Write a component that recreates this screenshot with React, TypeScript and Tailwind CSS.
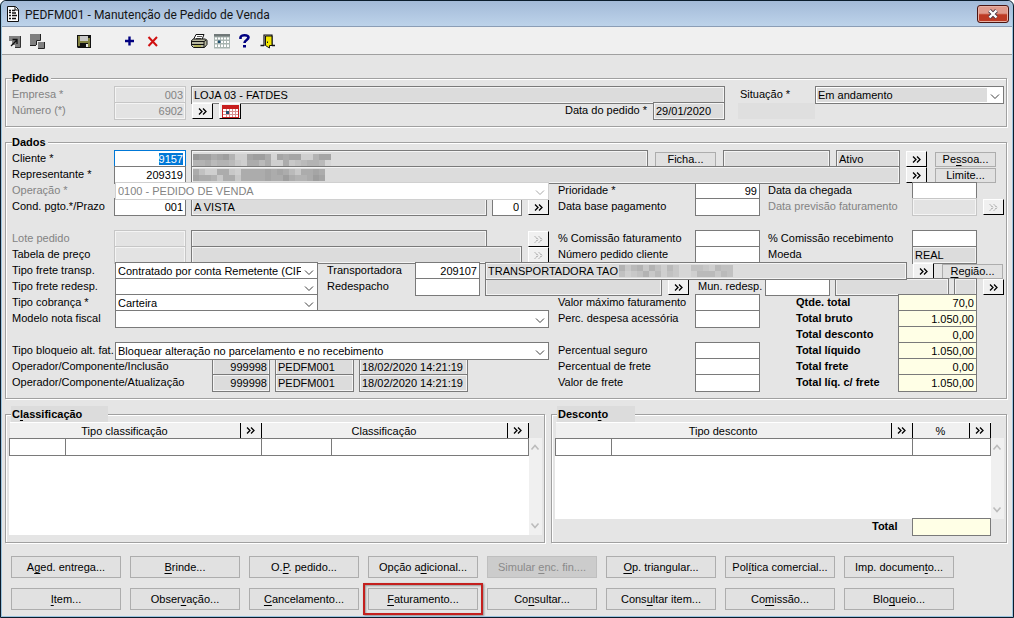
import { useEffect, useRef } from 'react';
import type { ReactNode } from 'react';
import clsx from 'clsx';

// "C&onsultar" -> the letter after & is the keyboard mnemonic
function Mnemonic({ text }: { text: string }) {
  const at = text.indexOf('&');
  if (at < 0) return <>{text}</>;
  return (
    <span className="whitespace-pre">
      {text.slice(0, at)}
      <u className="underline-offset-2">{text[at + 1]}</u>
      {text.slice(at + 2)}
    </span>
  );
}

interface GroupProps {
  title: string;
  shaded?: boolean;
  className?: string;
  children: ReactNode;
}

function Group({ title, shaded, className, children }: GroupProps) {
  return (
    <fieldset
      className={clsx(
        'min-w-0 border border-[#a0a0a0] shadow-[inset_1px_1px_0_#fff,1px_1px_0_#fff]',
        className
      )}
    >
      <legend
        className={clsx(
          'h-4 font-bold leading-4',
          shaded ? 'ml-0.5 w-[97px] bg-[#dcdcdc] pl-px' : 'bg-[#e5e5e5] pr-0.5'
        )}
      >
        <Mnemonic text={title} />
      </legend>
      {children}
    </fieldset>
  );
}

function Row({ children }: { children?: ReactNode }) {
  return <div className="flex h-4 items-start gap-[5px]">{children}</div>;
}

interface LabelProps {
  htmlFor: string;
  className?: string;
  muted?: boolean;
  children: ReactNode;
}

function Label({ htmlFor, className = 'w-[97px]', muted, children }: LabelProps) {
  return (
    <label
      htmlFor={htmlFor}
      className={clsx('h-4 shrink-0 whitespace-nowrap leading-4', muted && 'text-[#838383]', className)}
    >
      {children}
    </label>
  );
}

const tones = {
  edit: 'border-[#7a7a7a] bg-white',
  read: 'border-[#7a7a7a] bg-[#dcdcdc] shadow-[inset_0_0_0_1px_#f4f4f4]',
  off: 'border-[#c6c6c6] bg-[#e3e3e3] text-[#838383] shadow-[inset_0_0_0_1px_#f4f4f4]',
  total: 'border-[#7a7a7a] bg-[#ffffe6]',
};

interface FieldProps {
  id: string;
  label?: string;
  value?: string;
  tone?: keyof typeof tones;
  right?: boolean;
  className?: string;
}

function Field({ id, label, value = '', tone = 'edit', right, className }: FieldProps) {
  return (
    <input
      id={id}
      type="text"
      aria-label={label}
      defaultValue={value}
      readOnly={tone === 'read' || tone === 'total'}
      disabled={tone === 'off'}
      className={clsx(
        'h-[18px] min-w-0 border px-0.5 leading-[14px] outline-none',
        right && 'text-right',
        tones[tone],
        className
      )}
    />
  );
}

// Customer names are pixelated for privacy
function Mosaic({ shades, className }: { shades: string[]; className: string }) {
  const size = 6;
  return (
    <svg
      aria-hidden="true"
      width={shades[0].length * size}
      height={shades.length * size}
      shapeRendering="crispEdges"
      className={clsx('pointer-events-none absolute', className)}
    >
      {shades.map((line, y) =>
        [...line].map((c, x) => {
          const v = 130 + parseInt(c, 16) * 7;
          return (
            <rect
              key={`${x}-${y}`}
              x={x * size}
              y={y * size}
              width={size}
              height={size}
              fill={`rgb(${v},${v},${v})`}
            />
          );
        })
      )}
    </svg>
  );
}

interface SelectProps {
  id: string;
  value?: string;
  className?: string;
  disabled?: boolean;
  shaded?: boolean;
}

function Select({ id, value = '', className = 'flex-1', disabled, shaded }: SelectProps) {
  return (
    <span className={clsx('relative mx-px h-[18px] min-w-0', className)}>
      <select
        id={id}
        defaultValue={value}
        disabled={disabled}
        className={clsx(
          'block h-[18px] w-full appearance-none border pl-0.5 pr-4 leading-4 outline-none disabled:opacity-100',
          disabled ? 'border-[#d0d0d0] bg-white text-[#838383]' : 'border-[#7a7a7a]',
          shaded ? 'bg-[#dcdcdc] shadow-[inset_0_0_0_1px_#fff]' : 'bg-white'
        )}
      >
        <option value={value}>{value}</option>
      </select>
      <svg
        viewBox="0 0 16 16"
        className={clsx(
          'pointer-events-none absolute right-px top-px h-4 w-4 bg-white',
          disabled ? 'stroke-[#a8a8a8]' : 'stroke-[#404040]'
        )}
        fill="none"
      >
        <path d="M4 7.500l4 4 4-4" />
      </svg>
    </span>
  );
}

function Chevrons({ disabled }: { disabled?: boolean }) {
  return (
    <svg
      viewBox="0 0 9 7"
      className={clsx('h-[7px] w-[9px]', disabled ? 'stroke-[#777777]' : 'stroke-black')}
      fill="none"
      strokeWidth={disabled ? 1 : 1.3}
      strokeDasharray={disabled ? '1.4 1' : undefined}
    >
      <path d="M1 .5l3 3-3 3M5 .5l3 3-3 3" />
    </svg>
  );
}

interface LookupProps {
  label: string;
  disabled?: boolean;
}

function Lookup({ label, disabled }: LookupProps) {
  return (
    <button
      type="button"
      aria-label={label}
      disabled={disabled}
      className="mx-px mt-px flex h-4 w-[21px] shrink-0 items-center justify-center border border-b-black border-l-white border-r-black border-t-white bg-[#f0f0f0]"
    >
      <Chevrons disabled={disabled} />
    </button>
  );
}

function SmallButton({ text, className }: { text: string; className?: string }) {
  return (
    <button
      type="button"
      className={clsx(
        'mx-0.5 mt-0.5 h-[15px] w-[61px] shrink-0 border border-[#adadad] bg-[#e1e1e1] leading-[13px]',
        className
      )}
    >
      <Mnemonic text={text} />
    </button>
  );
}

function TotalRowItem({ id, label, value, push }: { id: string; label: string; value: string; push?: boolean }) {
  return (
    <>
      <Label htmlFor={id} className={clsx('w-[97px] font-bold', push ? 'ml-auto' : 'ml-[31px]')}>
        {label}
      </Label>
      <Field id={id} value={value} tone="total" right className="mr-7 w-[79px]" />
    </>
  );
}

function ClientCode() {
  const ref = useRef<HTMLInputElement>(null);

  useEffect(() => {
    ref.current?.focus();
    ref.current?.select();
  }, []);

  return (
    <input
      id="cliente"
      ref={ref}
      type="text"
      defaultValue="9157"
      className="h-[18px] w-[72px] border border-[#0078d7] bg-white px-0.5 text-right leading-[14px] outline-none selection:bg-[#0078d7] selection:text-white"
    />
  );
}

function ToolButton({ label, children }: { label: string; children: ReactNode }) {
  return (
    <button type="button" aria-label={label} className="flex h-6 w-[23px] items-center justify-center">
      <svg viewBox="0 0 18 18" className="h-[18px] w-[18px]" fill="none">
        {children}
      </svg>
    </button>
  );
}

function Toolbar() {
  return (
    <div className="flex h-7 items-center gap-[23px] border-b border-[#a0a0a0] bg-[#f0f0f0] pl-px">
      <div className="flex">
        <ToolButton label="Selecionar">
          <path d="M3 4h11v11H9v-2H6V9H3z" fill="#808080" />
          <path d="M14.5 4v11.5H9" stroke="#333" />
          <path d="M5 14l6-6M6.5 7.5H11V12" stroke="#111" strokeWidth="1.3" />
        </ToolButton>
        <ToolButton label="Navegar">
          <path d="M1 2h10v6H7v5H1z" fill="#808080" />
          <path d="M1 13.500h6M7.500 13V8.500H11.500V2" stroke="#222" />
          <path d="M9 10h6v6H9z" fill="#808080" />
          <path d="M9 16.500h6.500V10" stroke="#222" />
        </ToolButton>
      </div>
      <ToolButton label="Salvar">
        <path d="M2 3h14v13H3l-1-1z" fill="#111" />
        <path d="M3 4h2v10H3zM13 6h2v9h-2z" fill="#808040" />
        <path d="M3 9h12v2H3z" fill="#808040" />
        <path d="M5 4h8v5H5z" fill="#c8c8c8" />
        <path d="M11 12h2v3h-2z" fill="#e8e8e8" />
      </ToolButton>
      <div className="flex">
        <ToolButton label="Incluir">
          <path d="M8.500 4.500v9M4 9h9" stroke="#000080" strokeWidth="2.400" />
        </ToolButton>
        <ToolButton label="Excluir">
          <path d="M4.500 5l8.500 9M13 5l-8.500 9" stroke="#d01010" strokeWidth="2" />
        </ToolButton>
      </div>
      <div className="flex">
        <ToolButton label="Imprimir">
          <path d="M6 2.500h8l-2 5H3.500z" fill="#fff" stroke="#111" />
          <path d="M7 4.500h5M6 6.500h5" stroke="#555" />
          <path d="M1.500 8.500l2-1.500h12l1.500 1.500v4l-2.500 3h-11l-2-2z" fill="#b8b8a0" stroke="#111" />
          <path d="M2 9.500h12l2.500-1.500M14 9.500v5.500M2 12.500h12" stroke="#111" />
          <path d="M4 14h7" stroke="#b0b020" />
        </ToolButton>
        <ToolButton label="Calendário">
          <path d="M1 2h16v14.500H1z" fill="#a8b4b0" />
          <path d="M1 2h16v2.500H1z" fill="#707878" />
          <path
            d="M2 5.500h2v2H2zM5 5.500h2v2H5zM8 5.500h2v2H8zM11 5.500h2v2h-2zM14 5.500h2v2h-2zM2 9h2v2H2zM8 9h2v2H8zM11 9h2v2h-2zM14 9h2v2h-2zM2 12.500h2v2.500H2zM5 12.500h2v2.500H5zM8 12.500h2v2.500H8zM11 12.500h2v2.500h-2zM14 12.500h2v2.500h-2z"
            fill="#fff"
          />
          <path d="M5 8.500h2.500v2.500H5z" fill="#205070" />
        </ToolButton>
        <ToolButton label="Ajuda">
          <path d="M4.500 7V5.500c0-3 8-3 8 0 0 2.500-4 2.500-4 5.500" stroke="#000080" strokeWidth="2.600" />
          <path d="M7 13h3v2.500H7z" fill="#000080" />
        </ToolButton>
        <ToolButton label="Sair">
          <path d="M5 14V3h8v11" stroke="#111" strokeWidth="1.200" />
          <path d="M1.500 13.500H5M13 13.500h3" stroke="#111" strokeWidth="1.400" />
          <path d="M6.500 4H13v9.500h-2.500V16l-4-2.500z" fill="#f4e800" stroke="#111" />
          <path d="M8.500 9.500v1.500" stroke="#111" />
        </ToolButton>
      </div>
    </div>
  );
}

function TitleBar() {
  return (
    <header className="flex h-[26px] items-center border-b border-[#8b9db5] bg-linear-to-b from-[#a3bad8] to-[#bdd3ea] pl-[5px] pr-[3px]">
      <svg viewBox="0 0 12 16" className="h-4 w-3" fill="none">
        <path d="M.5.500h8l3 3v12H.500z" fill="#fff" stroke="#111" />
        <path d="M8 1v3h3" stroke="#111" />
        <path d="M2 4.500h2M5 4.500h3M2 6.500h2M5 7h4M2 9.500h2M5 9.500h5M2 12.500h2M5 12.500h4" stroke="#111" strokeWidth="1.300" />
      </svg>
      <h1 className="ml-1.5 mt-0.5 flex-1 font-[Roboto,sans-serif] text-[12px] leading-4 text-[#141414]">
        PEDFM001 - Manutenção de Pedido de Venda
      </h1>
      <button
        type="button"
        aria-label="Fechar"
        className="flex h-[18px] w-8 items-center justify-center rounded-[3px] border border-[#4a1512] bg-linear-to-b from-[#e09a8c] from-45% to-[#bd3a24] to-55% shadow-[inset_0_0_0_1px_#e8b0a4]"
      >
        <svg viewBox="0 0 12 10" className="h-2.5 w-3" fill="none">
          <path d="M2.500 1.500l7 7M9.500 1.500l-7 7" stroke="#4a3a48" strokeWidth="4" />
          <path d="M2.500 1.500l7 7M9.500 1.500l-7 7" stroke="#fff" strokeWidth="2.400" />
        </svg>
      </button>
    </header>
  );
}

function HeadCell({ text, colSpan }: { text: string; colSpan?: number }) {
  return (
    <th colSpan={colSpan} className="h-4 p-0 font-normal">
      <div className="flex h-4 border-t border-white bg-[#f0f0f0]">
        <span className="flex-1 border-r border-black text-center leading-4">{text}</span>
        <button
          type="button"
          aria-label={`Pesquisar ${text}`}
          className="flex w-[21px] items-center justify-center border-r border-black"
        >
          <Chevrons />
        </button>
      </div>
    </th>
  );
}

function ScrollBar() {
  return (
    <div className="mt-4 flex w-[13px] flex-col justify-between bg-[#f0f0f0] py-1.5">
      <svg viewBox="0 0 13 7" className="h-[7px] w-full stroke-[#bcbcbc]" fill="none" strokeWidth="1.600">
        <path d="M2.500 5.500l3.500-4 3.500 4" />
      </svg>
      <svg viewBox="0 0 13 7" className="h-[7px] w-full stroke-[#bcbcbc]" fill="none" strokeWidth="1.600">
        <path d="M2.500 1.500l3.500 4 3.500-4" />
      </svg>
    </div>
  );
}

const cell = 'h-[17px] border border-[#7a7a7a] bg-white p-0';

function Classificacao() {
  return (
    <Group title="C&lassificação" shaded className="pb-[7px] pl-[3px] pr-0.5">
      <div className="flex h-[113px]">
        <div className="flex flex-1 flex-col">
          <table className="w-full table-fixed border-collapse">
            <colgroup>
              <col className="w-[56px]" />
              <col className="w-[196px]" />
              <col className="w-[70px]" />
              <col />
            </colgroup>
            <thead>
              <tr>
                <HeadCell text="Tipo classificação" colSpan={2} />
                <HeadCell text="Classificação" colSpan={2} />
              </tr>
            </thead>
            <tbody>
              <tr>
                <td className={cell} />
                <td className={cell} />
                <td className={cell} />
                <td className={cell} />
              </tr>
            </tbody>
          </table>
          <div className="flex-1 bg-white" />
        </div>
        <ScrollBar />
      </div>
    </Group>
  );
}

function Desconto() {
  return (
    <Group title="Descon&to" shaded className="pl-[3px] pr-0.5 [&>legend]:w-[78px]">
      <div className="flex h-[97px]">
        <div className="flex flex-1 flex-col">
          <table className="w-full table-fixed border-collapse">
            <colgroup>
              <col className="w-[56px]" />
              <col />
              <col className="w-[78px]" />
            </colgroup>
            <thead>
              <tr>
                <HeadCell text="Tipo desconto" colSpan={2} />
                <HeadCell text="%" />
              </tr>
            </thead>
            <tbody>
              <tr>
                <td className={cell} />
                <td className={cell} />
                <td className={cell} />
              </tr>
            </tbody>
          </table>
          <div className="flex-1 bg-white" />
        </div>
        <ScrollBar />
      </div>
      <div className="-mt-px flex justify-end pr-[13px]">
        <Label htmlFor="total-desc" className="w-10 font-bold">
          Total
        </Label>
        <Field id="total-desc" tone="total" className="w-[79px]" />
      </div>
    </Group>
  );
}

const actions = [
  { text: 'A&ged. entrega...' },
  { text: '&Brinde...' },
  { text: 'O.&P. pedido...' },
  { text: 'Opção a&dicional...' },
  { text: 'Simular &enc. fin....', disabled: true },
  { text: '&Op. triangular...' },
  { text: 'Pol&ítica comercial...' },
  { text: 'Imp. documen&to...' },
  { text: '&Item...' },
  { text: 'Obser&vação...' },
  { text: '&Cancelamento...' },
  { text: '&Faturamento...', marked: true },
  { text: 'Co&nsultar...' },
  { text: 'Cons&ultar item...' },
  { text: 'Co&missão...' },
  { text: 'Blo&queio...' },
];

export default function App() {
  return (
    <div className="rounded-t-md border border-[#0b1c2c] bg-[#9cc4de] font-['Liberation_Sans',Arial,sans-serif] text-[11px] text-black">
      <div className="mx-px mb-px overflow-hidden rounded-t-[5px] bg-[#e5e5e5]">
        <TitleBar />
        <Toolbar />
        <main className="flex flex-col gap-[7px] pb-1.5 pl-[3px] pr-[5px] pt-[15px]">
          <Group title="Pedido" className="pb-2 pl-1.5 pr-px">
            <Row>
              <Label htmlFor="empresa" muted>Empresa *</Label>
              <Field id="empresa" value="003" tone="off" right className="w-[72px]" />
              <Field id="empresa-nome" label="Nome da empresa" value="LOJA 03 - FATDES" tone="read" className="flex-1" />
              <Label htmlFor="situacao" className="ml-2.5 w-[69px]">Situação *</Label>
              <Select id="situacao" value="Em andamento" shaded className="w-[189px]" />
            </Row>
            <Row>
              <Label htmlFor="numero" muted>Número (*)</Label>
              <Field id="numero" value="6902" tone="off" right className="w-[72px]" />
              <Lookup label="Pesquisar pedido" />
              <button
                type="button"
                aria-label="Agenda"
                className="mt-px flex h-4 w-[22px] items-center justify-center border border-b-black border-l-white border-r-black border-t-white bg-[#f0f0f0]"
              >
                <svg viewBox="0 0 17 13" className="h-[13px] w-[17px]">
                  <path d="M0 0h17v13H0z" fill="#c81e1e" />
                  <path d="M1 4h15v8H1z" fill="#fff" />
                  <path d="M4.500 4v8M7.500 4v8M10.500 4v8M13.500 4v8M1 6.500h15M1 9.500h15" stroke="#d89090" fill="none" />
                  <path d="M4 6h3v3H4z" fill="#205070" />
                </svg>
              </button>
              <Label htmlFor="data-pedido" className="ml-auto w-[83px]">Data do pedido *</Label>
              <Field id="data-pedido" value="29/01/2020" tone="read" className="w-[72px]" />
              <div className="ml-2 mr-[190px] mt-px h-4 w-[77px] bg-[#dfdfdf]" />
            </Row>
          </Group>

          <Group title="Dados" className="pb-2 pl-1.5 pr-px">
            <Row>
              <Label htmlFor="cliente">Cliente *</Label>
              <ClientCode />
              <span className="relative flex flex-1">
                <Field id="cliente-nome" label="Nome do cliente" tone="read" className="w-full" />
                <Mosaic
                  className="left-0.5 top-1"
                  shades={['3446547bb5446c5655bb755', '7768778ab6686bb6a98778c']}
                />
              </span>
              <SmallButton text="Ficha..." />
              <Field id="cliente-doc" label="Documento" tone="read" className="w-[107px]" />
              <Field id="cliente-status" label="Status do cliente" value="Ativo" tone="read" className="ml-px w-[64px]" />
              <Lookup label="Pesquisar cliente" />
              <SmallButton text="Pe&ssoa..." className="mr-[9px]" />
            </Row>
            <Row>
              <Label htmlFor="representante">Representante *</Label>
              <Field id="representante" value="209319" right className="w-[72px]" />
              <span className="relative flex flex-1">
                <Field id="representante-nome" label="Nome do representante" tone="read" className="w-full" />
                <Mosaic
                  className="left-0.5 top-[3px]"
                  shades={['69bb66ab666656568a6656', '5667a66a66665664677645']}
                />
              </span>
              <Lookup label="Pesquisar representante" />
              <SmallButton text="Limite..." className="mr-[9px]" />
            </Row>
            <Row>
              <Label htmlFor="operacao" muted>Operação *</Label>
              <Select id="operacao" value="0100 - PEDIDO DE VENDA" disabled />
              <Label htmlFor="prioridade" className="ml-[3px] w-[132px]">Prioridade *</Label>
              <Field id="prioridade" value="99" right className="w-[65px]" />
              <Label htmlFor="chegada" className="ml-[3px] w-[139px]">Data da chegada</Label>
              <Field id="chegada" className="mr-7 w-[65px]" />
            </Row>
            <Row>
              <Label htmlFor="cond">Cond. pgto.*/Prazo</Label>
              <Field id="cond" value="001" right className="w-[72px]" />
              <Field id="cond-nome" label="Condição de pagamento" value="A VISTA" tone="read" className="flex-1" />
              <Field id="prazo" label="Prazo" value="0" right className="w-[30px]" />
              <Lookup label="Pesquisar condição" />
              <Label htmlFor="data-base" className="ml-[3px] w-[132px]">Data base pagamento</Label>
              <Field id="data-base" className="w-[65px]" />
              <Label htmlFor="previsao" muted className="ml-[3px] w-[139px]">Data previsão faturamento</Label>
              <Field id="previsao" tone="off" className="w-[65px]" />
              <Lookup label="Pesquisar previsão" disabled />
            </Row>
            <Row />
            <Row>
              <Label htmlFor="lote" muted>Lote pedido</Label>
              <Field id="lote" tone="off" className="w-[72px]" />
              <Field id="lote-nome" label="Descrição do lote" tone="read" className="mr-[35px] flex-1" />
              <Lookup label="Pesquisar lote" disabled />
              <Label htmlFor="com-fat" className="ml-[3px] w-[132px]">% Comissão faturamento</Label>
              <Field id="com-fat" className="w-[65px]" />
              <Label htmlFor="com-rec" className="ml-[3px] w-[139px]">% Comissão recebimento</Label>
              <Field id="com-rec" className="mr-7 w-[65px]" />
            </Row>
            <Row>
              <Label htmlFor="tabela">Tabela de preço</Label>
              <Field id="tabela" tone="off" className="w-[72px]" />
              <Field id="tabela-nome" label="Descrição da tabela" tone="read" className="flex-1" />
              <Lookup label="Pesquisar tabela" disabled />
              <Label htmlFor="num-cli" className="ml-[3px] w-[132px]">Número pedido cliente</Label>
              <Field id="num-cli" className="w-[65px]" />
              <Label htmlFor="moeda" className="ml-[3px] w-[139px]">Moeda</Label>
              <Field id="moeda" value="REAL" tone="read" className="mr-7 w-[65px]" />
            </Row>
            <Row>
              <Label htmlFor="frete-transp">Tipo frete transp.</Label>
              <Select id="frete-transp" value="Contratado por conta Remetente (CIF)" className="w-[203px]" />
              <Label htmlFor="transp" className="ml-[3px] w-[83px]">Transportadora</Label>
              <Field id="transp" value="209107" right className="w-[65px]" />
              <span className="relative flex flex-1">
                <Field id="transp-nome" label="Nome da transportadora" value="TRANSPORTADORA TAO" tone="read" className="w-full" />
                <Mosaic className="left-[134px] top-[3px]" shades={['7a87a79b8acc99ab899', '9ba97a8b9accb888a89']} />
              </span>
              <Lookup label="Pesquisar transportadora" />
              <SmallButton text="&Região..." />
            </Row>
            <Row>
              <Label htmlFor="frete-redesp">Tipo frete redesp.</Label>
              <Select id="frete-redesp" className="w-[203px]" />
              <Label htmlFor="redespacho" className="ml-[3px] w-[83px]">Redespacho</Label>
              <Field id="redespacho" className="w-[65px]" />
              <Field id="redespacho-nome" label="Nome do redespacho" tone="read" className="flex-1" />
              <Lookup label="Pesquisar redespacho" />
              <Label htmlFor="mun" className="ml-[3px] w-[62px]">Mun. redesp.</Label>
              <Field id="mun" className="w-[65px]" />
              <Field id="mun-nome" label="Nome do município" tone="read" className="w-[114px]" />
              <Field id="mun-uf" label="UF" tone="read" className="w-[23px]" />
              <Lookup label="Pesquisar município" />
            </Row>
            <Row>
              <Label htmlFor="cobranca">Tipo cobrança *</Label>
              <Select id="cobranca" value="Carteira" className="w-[203px]" />
              <Label htmlFor="val-max" className="ml-auto w-[132px]">Valor máximo faturamento</Label>
              <Field id="val-max" className="w-[65px]" />
              <TotalRowItem id="qtde" label="Qtde. total" value="70,0" />
            </Row>
            <Row>
              <Label htmlFor="modelo">Modelo nota fiscal</Label>
              <Select id="modelo" />
              <Label htmlFor="despesa" className="ml-[3px] w-[132px]">Perc. despesa acessória</Label>
              <Field id="despesa" className="w-[65px]" />
              <TotalRowItem id="bruto" label="Total bruto" value="1.050,00" />
            </Row>
            <Row>
              <TotalRowItem id="desconto" label="Total desconto" value="0,00" push />
            </Row>
            <Row>
              <Label htmlFor="bloqueio">Tipo bloqueio alt. fat.</Label>
              <Select id="bloqueio" value="Bloquear alteração no parcelamento e no recebimento" />
              <Label htmlFor="seguro" className="ml-[3px] w-[132px]">Percentual seguro</Label>
              <Field id="seguro" className="w-[65px]" />
              <TotalRowItem id="liquido" label="Total líquido" value="1.050,00" />
            </Row>
            <Row>
              <Label htmlFor="op-inc" className="w-[195px]">Operador/Componente/Inclusão</Label>
              <Field id="op-inc" value="999998" tone="read" right className="w-[58px]" />
              <Field id="comp-inc" label="Componente de inclusão" value="PEDFM001" tone="read" className="w-[79px]" />
              <Field id="data-inc" label="Data de inclusão" value="18/02/2020 14:21:19" tone="read" className="w-[109px]" />
              <Label htmlFor="perc-frete" className="ml-auto w-[132px]">Percentual de frete</Label>
              <Field id="perc-frete" className="w-[65px]" />
              <TotalRowItem id="frete" label="Total frete" value="0,00" />
            </Row>
            <Row>
              <Label htmlFor="op-atu" className="w-[195px]">Operador/Componente/Atualização</Label>
              <Field id="op-atu" value="999998" tone="read" right className="w-[58px]" />
              <Field id="comp-atu" label="Componente de atualização" value="PEDFM001" tone="read" className="w-[79px]" />
              <Field id="data-atu" label="Data de atualização" value="18/02/2020 14:21:19" tone="read" className="w-[109px]" />
              <Label htmlFor="val-frete" className="ml-auto w-[132px]">Valor de frete</Label>
              <Field id="val-frete" className="w-[65px]" />
              <TotalRowItem id="liq-frete" label="Total líq. c/ frete" value="1.050,00" />
            </Row>
          </Group>

          <div className="grid grid-cols-[540fr_456fr] gap-1.5">
            <Classificacao />
            <Desconto />
          </div>

          <nav className="mt-1.5 grid grid-cols-8 gap-x-[9px] gap-y-2.5 pl-1.5 pr-[53px]">
            {actions.map(a => (
              <button
                key={a.text}
                type="button"
                disabled={a.disabled}
                className={clsx(
                  'relative h-[22px] border leading-5',
                  a.disabled ? 'border-[#bfbfbf] bg-[#cccccc] text-[#8a8a8a]' : 'border-[#adadad] bg-[#e1e1e1]'
                )}
              >
                <Mnemonic text={a.text} />
                {a.marked && (
                  <span className="pointer-events-none absolute -inset-[6px] border-2 border-[#c4201e] shadow-[1px_1px_2px_#00000066,inset_1px_1px_2px_#00000055]" />
                )}
              </button>
            ))}
          </nav>
        </main>
      </div>
    </div>
  );
}
